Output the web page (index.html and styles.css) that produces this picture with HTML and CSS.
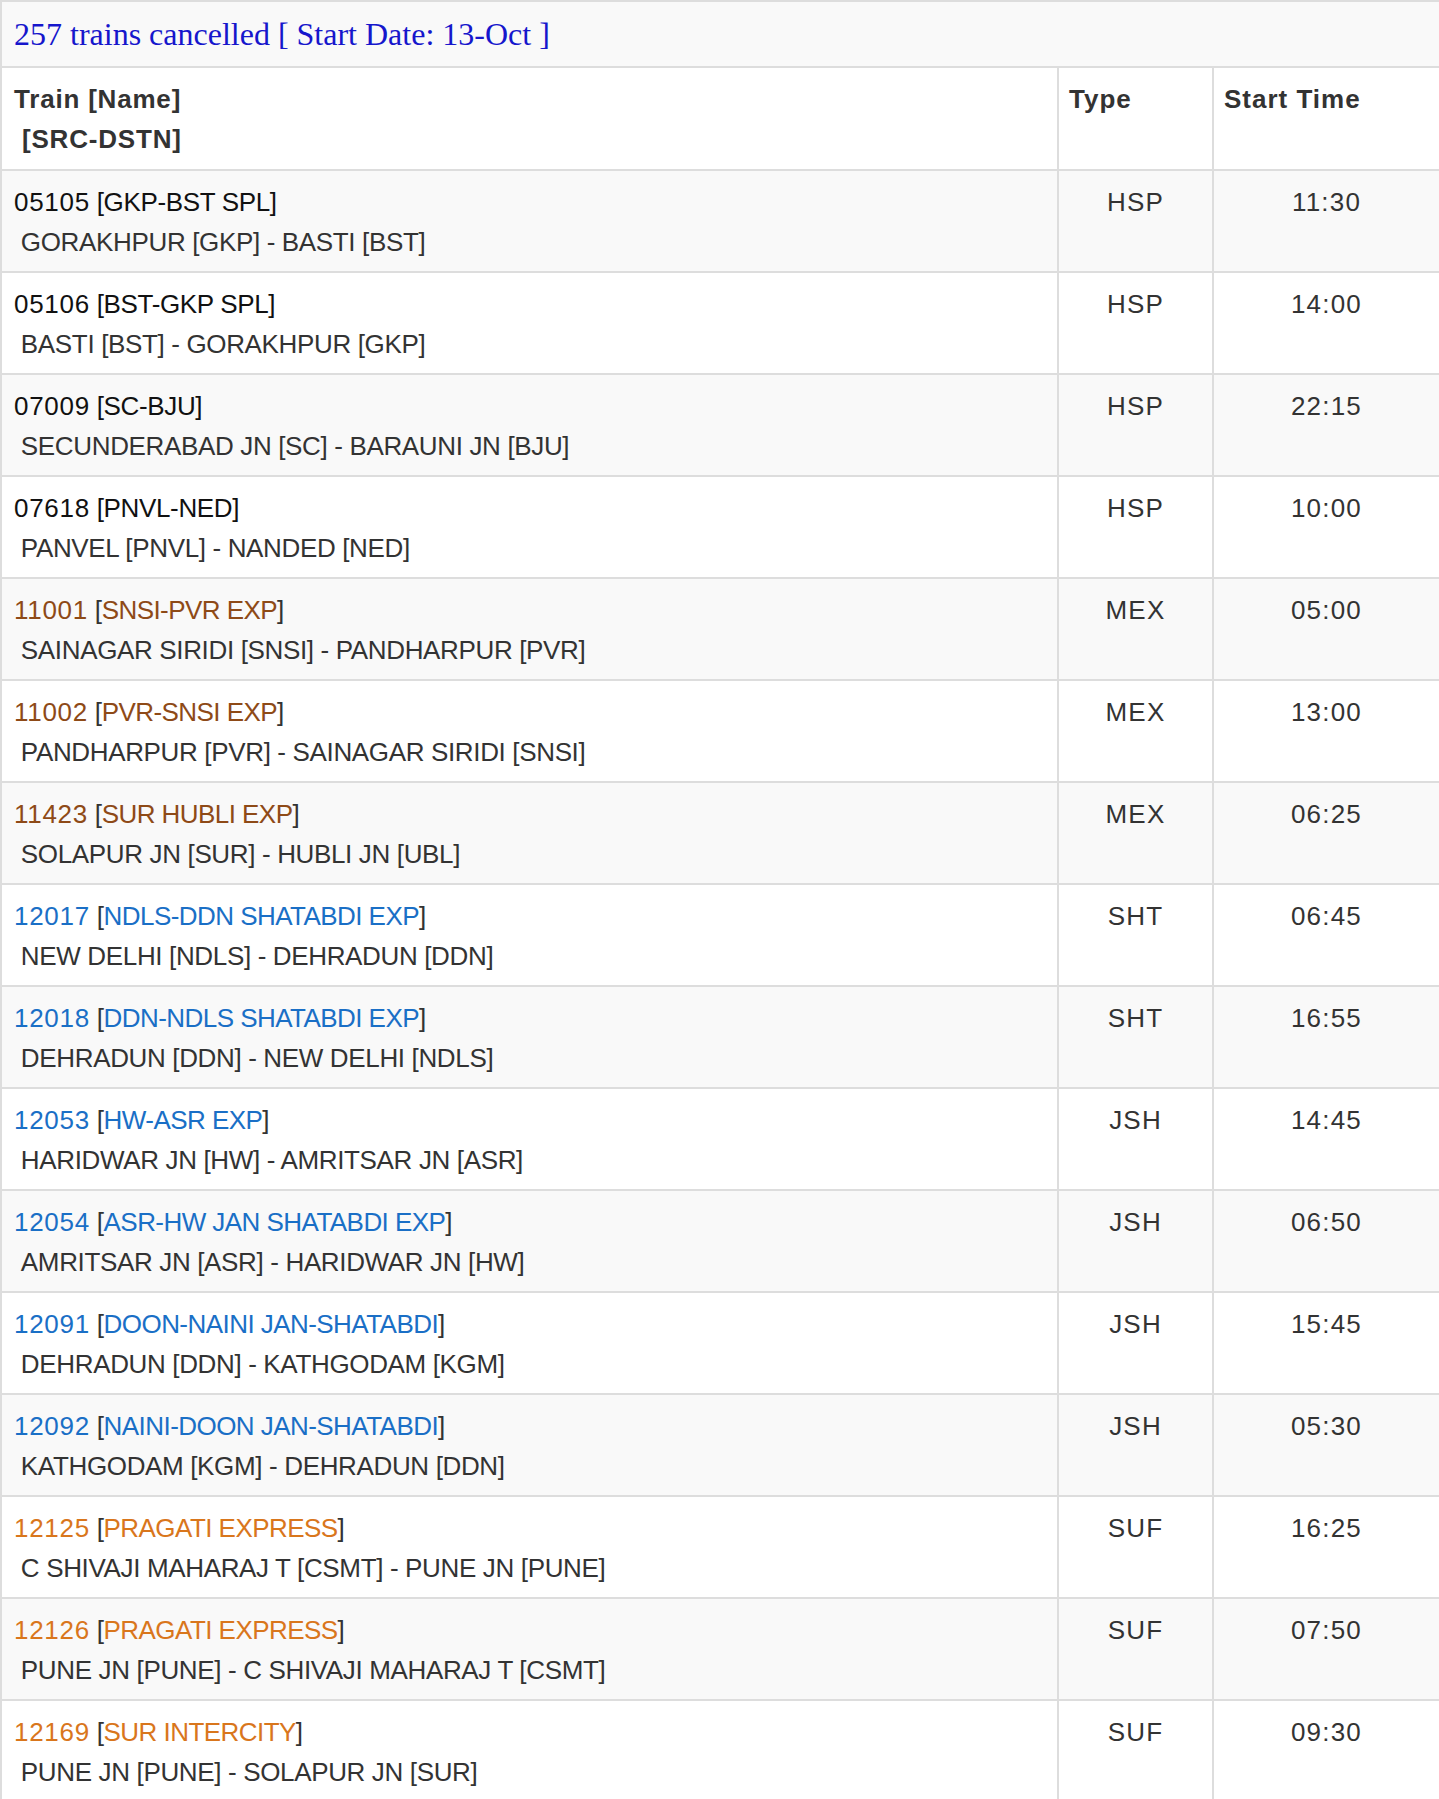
FILE: index.html
```html
<!DOCTYPE html>
<html>
<head>
<meta charset="utf-8">
<title>Cancelled trains</title>
<link rel="stylesheet" href="styles.css">
</head>
<body>
<div class="tbl">
  <div class="title">257 trains cancelled [ Start Date: 13-Oct ]</div>
  <div class="row head">
    <div class="c c1">Train [Name]<br>&nbsp;[SRC-DSTN]</div>
    <div class="c c2">Type</div>
    <div class="c c3">Start Time</div>
  </div>

  <div class="row">
    <div class="c c1"><span class="dk"><span class="num">05105</span> [GKP-BST SPL]</span><br>&nbsp;GORAKHPUR [GKP] - BASTI [BST]</div>
    <div class="c c2 ctr">HSP</div><div class="c c3 ctr">11:30</div>
  </div>
  <div class="row">
    <div class="c c1"><span class="dk"><span class="num">05106</span> [BST-GKP SPL]</span><br>&nbsp;BASTI [BST] - GORAKHPUR [GKP]</div>
    <div class="c c2 ctr">HSP</div><div class="c c3 ctr">14:00</div>
  </div>
  <div class="row">
    <div class="c c1"><span class="dk"><span class="num">07009</span> [SC-BJU]</span><br>&nbsp;SECUNDERABAD JN [SC] - BARAUNI JN [BJU]</div>
    <div class="c c2 ctr">HSP</div><div class="c c3 ctr">22:15</div>
  </div>
  <div class="row">
    <div class="c c1"><span class="dk"><span class="num">07618</span> [PNVL-NED]</span><br>&nbsp;PANVEL [PNVL] - NANDED [NED]</div>
    <div class="c c2 ctr">HSP</div><div class="c c3 ctr">10:00</div>
  </div>
  <div class="row">
    <div class="c c1"><span class="num br">11001</span> [<span class="br">SNSI-PVR EXP</span>]<br>&nbsp;SAINAGAR SIRIDI [SNSI] - PANDHARPUR [PVR]</div>
    <div class="c c2 ctr">MEX</div><div class="c c3 ctr">05:00</div>
  </div>
  <div class="row">
    <div class="c c1"><span class="num br">11002</span> [<span class="br">PVR-SNSI EXP</span>]<br>&nbsp;PANDHARPUR [PVR] - SAINAGAR SIRIDI [SNSI]</div>
    <div class="c c2 ctr">MEX</div><div class="c c3 ctr">13:00</div>
  </div>
  <div class="row">
    <div class="c c1"><span class="num br">11423</span> [<span class="br">SUR HUBLI EXP</span>]<br>&nbsp;SOLAPUR JN [SUR] - HUBLI JN [UBL]</div>
    <div class="c c2 ctr">MEX</div><div class="c c3 ctr">06:25</div>
  </div>
  <div class="row">
    <div class="c c1"><span class="num bl">12017</span> [<span class="bl">NDLS-DDN SHATABDI EXP</span>]<br>&nbsp;NEW DELHI [NDLS] - DEHRADUN [DDN]</div>
    <div class="c c2 ctr">SHT</div><div class="c c3 ctr">06:45</div>
  </div>
  <div class="row">
    <div class="c c1"><span class="num bl">12018</span> [<span class="bl">DDN-NDLS SHATABDI EXP</span>]<br>&nbsp;DEHRADUN [DDN] - NEW DELHI [NDLS]</div>
    <div class="c c2 ctr">SHT</div><div class="c c3 ctr">16:55</div>
  </div>
  <div class="row">
    <div class="c c1"><span class="num bl">12053</span> [<span class="bl">HW-ASR EXP</span>]<br>&nbsp;HARIDWAR JN [HW] - AMRITSAR JN [ASR]</div>
    <div class="c c2 ctr">JSH</div><div class="c c3 ctr">14:45</div>
  </div>
  <div class="row">
    <div class="c c1"><span class="num bl">12054</span> [<span class="bl">ASR-HW JAN SHATABDI EXP</span>]<br>&nbsp;AMRITSAR JN [ASR] - HARIDWAR JN [HW]</div>
    <div class="c c2 ctr">JSH</div><div class="c c3 ctr">06:50</div>
  </div>
  <div class="row">
    <div class="c c1"><span class="num bl">12091</span> [<span class="bl">DOON-NAINI JAN-SHATABDI</span>]<br>&nbsp;DEHRADUN [DDN] - KATHGODAM [KGM]</div>
    <div class="c c2 ctr">JSH</div><div class="c c3 ctr">15:45</div>
  </div>
  <div class="row">
    <div class="c c1"><span class="num bl">12092</span> [<span class="bl">NAINI-DOON JAN-SHATABDI</span>]<br>&nbsp;KATHGODAM [KGM] - DEHRADUN [DDN]</div>
    <div class="c c2 ctr">JSH</div><div class="c c3 ctr">05:30</div>
  </div>
  <div class="row">
    <div class="c c1"><span class="num or">12125</span> [<span class="or">PRAGATI EXPRESS</span>]<br>&nbsp;C SHIVAJI MAHARAJ T [CSMT] - PUNE JN [PUNE]</div>
    <div class="c c2 ctr">SUF</div><div class="c c3 ctr">16:25</div>
  </div>
  <div class="row">
    <div class="c c1"><span class="num or">12126</span> [<span class="or">PRAGATI EXPRESS</span>]<br>&nbsp;PUNE JN [PUNE] - C SHIVAJI MAHARAJ T [CSMT]</div>
    <div class="c c2 ctr">SUF</div><div class="c c3 ctr">07:50</div>
  </div>
  <div class="row">
    <div class="c c1"><span class="num or">12169</span> [<span class="or">SUR INTERCITY</span>]<br>&nbsp;PUNE JN [PUNE] - SOLAPUR JN [SUR]</div>
    <div class="c c2 ctr">SUF</div><div class="c c3 ctr">09:30</div>
  </div>
</div>
</body>
</html>
```

FILE: styles.css
```css
* { box-sizing: border-box; }

html, body {
  margin: 0;
  padding: 0;
  background: #ffffff;
}

body {
  font-family: "Liberation Sans", Arial, Helvetica, sans-serif;
  font-size: 26px;
  line-height: 40px;
  color: #333333;
}

.tbl {
  width: 100%;
  border-top: 2px solid #dddddd;
  border-left: 2px solid #dddddd;
}

.title {
  background: #f9f9f9;
  border-bottom: 2px solid #dddddd;
  padding: 12px 12px 12px 12px;
  font-family: "Liberation Serif", "Times New Roman", serif;
  font-size: 32px;
  line-height: 40px;
  color: #1616cc;
}

.row {
  display: grid;
  grid-template-columns: 1057px 155px 1fr;
  border-bottom: 2px solid #dddddd;
}

.row:nth-child(odd) {
  background: #f9f9f9;
}

.row.head {
  background: #ffffff;
  font-weight: bold;
  color: #333333;
  letter-spacing: 1px;
}

.row.head .c {
  min-height: 101px;
  padding-top: 11px;
}

.c {
  padding: 11px 10px 9px 10px;
  min-height: 100px;
}

.c1 {
  padding-left: 12px;
  border-right: 2px solid #dddddd;
  letter-spacing: -0.35px;
}

.row.head .c1 {
  letter-spacing: 0.8px;
}

.c2 {
  border-right: 2px solid #dddddd;
}

.ctr {
  text-align: center;
  padding-left: 0;
  padding-right: 0;
  letter-spacing: 1.2px;
}

.num { letter-spacing: 0.7px; }

.br, .bl, .or { letter-spacing: -0.55px; }
.num.br, .num.bl, .num.or { letter-spacing: 0.7px; }

.dk { color: #111111; }
.br { color: #8e4a17; }
.bl { color: #1a6fc6; }
.or { color: #d9761c; }
```
